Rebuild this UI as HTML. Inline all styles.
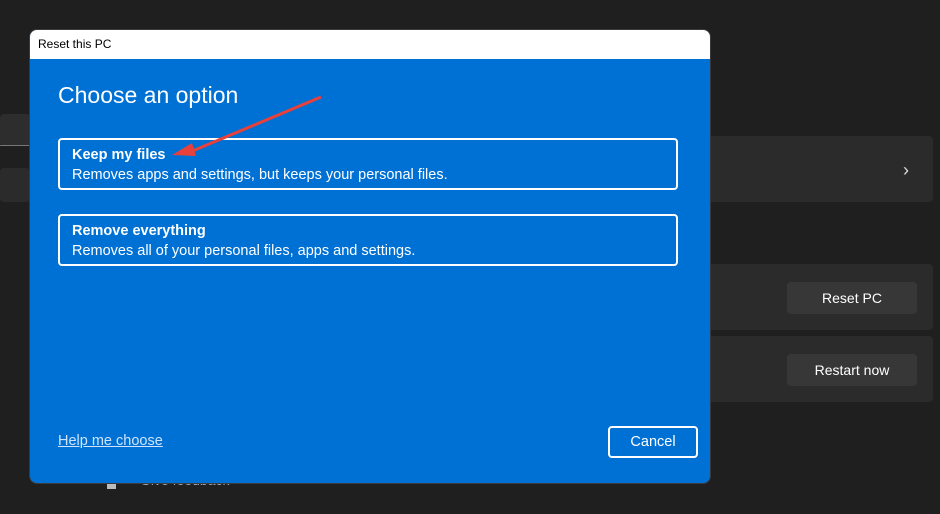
<!DOCTYPE html>
<html><head><style>
body{margin:0;width:940px;height:514px;background:#1f1f1f;position:relative;overflow:hidden;font-family:"Liberation Sans",sans-serif}
.card{position:absolute;background:#2b2b2b;border-radius:4px}
.btn{position:absolute;background:#373737;border-radius:4px;color:#fff;font-size:14px;text-align:center;line-height:32px}
.dlg{position:absolute;left:30px;top:30px;width:680px;height:453px;border-radius:7px;overflow:hidden;background:#0071d4;box-shadow:0 0 0 1px #3a3a3a}
.tb{height:29px;background:#fff;font-size:12px;line-height:29px;padding-left:8px;color:#000}
.opt{position:absolute;left:28px;width:616px;height:48px;border:2px solid #fff;border-radius:4px;color:#fff}
.opt b{position:absolute;left:12px;top:7px;font-size:14.5px}
.opt span{position:absolute;left:12px;top:27px;font-size:14.5px}
</style></head><body>
<div class="card" style="left:0;top:114px;width:30px;height:32px;background:#2d2d2d"></div>
<div style="position:absolute;left:0;top:145px;width:30px;height:1px;background:#777"></div>
<div class="card" style="left:0;top:168px;width:30px;height:34px"></div>
<div class="card" style="left:700px;top:136px;width:233px;height:66px"></div>
<div style="position:absolute;left:903px;top:160px;color:#ddd;font-size:18px">›</div>
<div class="card" style="left:700px;top:264px;width:233px;height:66px"></div>
<div class="card" style="left:700px;top:336px;width:233px;height:66px"></div>
<div class="btn" style="left:787px;top:282px;width:130px;height:32px">Reset PC</div>
<div class="btn" style="left:787px;top:354px;width:130px;height:32px">Restart now</div>
<div style="position:absolute;left:140px;top:472px;color:#9ab;font-size:14px">Give feedback</div>
<div style="position:absolute;left:107px;top:481px;width:9px;height:8px;background:#bbb"></div>
<div class="dlg">
<div class="tb">Reset this PC</div>
<div style="position:absolute;left:28px;top:52px;color:#fff;font-size:23px">Choose an option</div>
<div class="opt" style="top:108px"><b>Keep my files</b><span>Removes apps and settings, but keeps your personal files.</span></div>
<div class="opt" style="top:184px"><b>Remove everything</b><span>Removes all of your personal files, apps and settings.</span></div>
<div style="position:absolute;left:28px;top:403px;color:#cfe4fb;font-size:14.5px;text-decoration:underline">Help me choose</div>
<div style="position:absolute;left:578px;top:396px;width:86px;height:28px;border:2px solid #fff;border-radius:4px;color:#fff;font-size:14.5px;text-align:center;line-height:28px">Cancel</div>
<svg style="position:absolute;left:0;top:0" width="680" height="453"><line x1="291" y1="67" x2="160" y2="122" stroke="#e8403a" stroke-width="3"/><polygon points="142,125 162,113 166,126" fill="#e8403a"/></svg>
</div>
</body></html>
